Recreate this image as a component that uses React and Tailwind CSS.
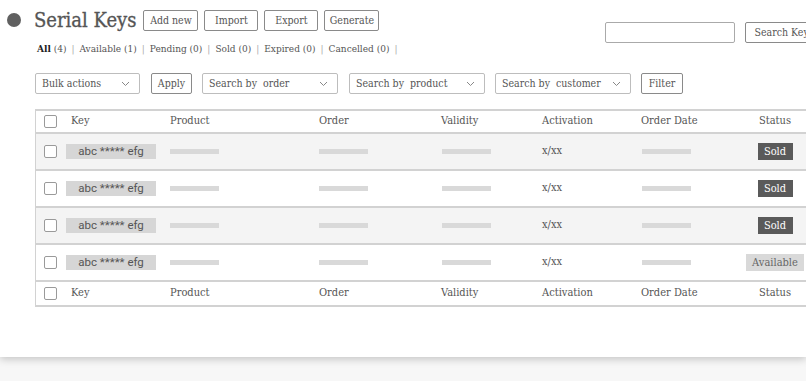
import React from 'react';

const slab = "font-['DejaVu_Serif_Condensed','DejaVu_Serif',serif]";

const rows = [
    { status: 'Sold', shaded: true },
    { status: 'Sold', shaded: false },
    { status: 'Sold', shaded: true },
    { status: 'Available', shaded: false },
];

const cols = 'grid grid-cols-[30px_104px_149px_122px_101px_99px_100px_80px] items-center';

const Checkbox = () => (
    <div className="ml-[8px] w-[13px] h-[13px] border border-[#9a9a9a] rounded-[2px] bg-white" />
);

const Bar = () => <div className="w-[49px] h-[5px] bg-[#d9d9d9]" />;

const Chevron = () => (
    <svg width="9" height="6" viewBox="0 0 9 6" className="text-[#888]">
        <path d="M1 1l3.5 3.5L8 1" fill="none" stroke="currentColor" strokeWidth="1" />
    </svg>
);

const Btn = ({ children, className = '' }) => (
    <button className={`h-[21px] border border-[#8a8a8a] rounded-[2px] bg-white text-[10.5px] text-[#555] leading-none whitespace-nowrap ${className}`}>
        {children}
    </button>
);

const Select = ({ label, width }) => (
    <div className={`${width} h-[21px] flex items-center justify-between pl-[6px] pr-[9px] border border-[#bdbdbd] rounded-[2px] text-[10.5px] text-[#555]`}>
        <span className="whitespace-pre">{label}</span>
        <Chevron />
    </div>
);

const HeaderRow = ({ bottom }) => (
    <div className={`${cols} h-[23px] text-[11px] text-[#555] ${bottom ? '' : 'border-b-2 border-[#d2d2d2]'}`}>
        <Checkbox />
        <span className="pl-[5px]">Key</span>
        <span>Product</span>
        <span>Order</span>
        <span>Validity</span>
        <span>Activation</span>
        <span>Order Date</span>
        <span className="w-[68px] text-center">Status</span>
    </div>
);

const App = () => {
    const links = [
        ['All', '4'],
        ['Available', '1'],
        ['Pending', '0'],
        ['Sold', '0'],
        ['Expired', '0'],
        ['Cancelled', '0'],
    ];

    return (
        <div className={`w-[806px] h-[381px] overflow-hidden bg-[#f7f7f7] ${slab}`}>
            <div className="h-[357px] bg-white shadow-[0_2px_8px_rgba(0,0,0,0.22)] overflow-hidden">
                <div className="w-[860px]">
                    {/* title bar */}
                    <div className="flex items-start h-[43px] pl-[7px] pt-[10px]">
                        <div className="mt-[3px] w-[14px] h-[14px] rounded-full bg-[#606060]" />
                        <h1 className="ml-[13px] text-[20px] leading-[21px] text-[#555] [-webkit-text-stroke:0.3px_#555]">Serial Keys</h1>
                        <div className="ml-[7px] flex gap-[6px]">
                            <Btn className="w-[55px]">Add new</Btn>
                            <Btn className="w-[54px]">Import</Btn>
                            <Btn className="w-[54px]">Export</Btn>
                            <Btn className="w-[55px]">Generate</Btn>
                        </div>
                        <div className="ml-[226px] mt-[12px] w-[130px] h-[21px] border border-[#aaa] rounded-[2px]" />
                        <Btn className="ml-[10px] mt-[12px] w-[80px] text-left pl-[8px]">Search Key</Btn>
                    </div>

                    {/* status links */}
                    <div className="h-[12px] leading-[12px] pl-[37px] flex items-center text-[10px] text-[#555]">
                        {links.map(([name, n], i) => (
                            <React.Fragment key={name}>
                                <span>
                                    <span className={i === 0 ? 'font-bold text-[#222]' : ''}>{name}</span> ({n})
                                </span>
                                <span className="mx-[5px] text-[#aaa]">|</span>
                            </React.Fragment>
                        ))}
                    </div>

                    {/* filters */}
                    <div className="mt-[18px] pl-[35px] flex items-center">
                        <Select label="Bulk actions" width="w-[105px]" />
                        <Btn className="ml-[11px] w-[41px]">Apply</Btn>
                        <Select label="Search by  order" width="ml-[10px] w-[136px]" />
                        <Select label="Search by  product" width="ml-[11px] w-[136px]" />
                        <Select label="Search by  customer" width="ml-[10px] w-[136px]" />
                        <Btn className="ml-[10px] w-[42px]">Filter</Btn>
                    </div>

                    {/* table */}
                    <div className="mt-[15px] ml-[35px] border-t-2 border-l border-b-2 border-[#d2d2d2]">
                        <HeaderRow />
                        {rows.map((r, i) => (
                            <div
                                key={i}
                                className={`${cols} h-[37px] border-b-2 border-[#d2d2d2] text-[11px] text-[#555] ${r.shaded ? 'bg-[#f4f4f4]' : 'bg-white'}`}
                            >
                                <Checkbox />
                                <div className="w-[90px] h-[15px] bg-[#d6d6d6] flex items-center justify-center font-['Roboto',sans-serif] text-[11.5px] text-[#555]">
                                    abc ***** efg
                                </div>
                                <Bar />
                                <Bar />
                                <div className="pl-[1px]"><Bar /></div>
                                <span>x/xx</span>
                                <div className="pl-[1px]"><Bar /></div>
                                <div className="w-[68px] flex justify-center">
                                    {r.status === 'Sold' ? (
                                        <span className="w-[35px] text-center h-[17px] leading-[17px] bg-[#5a5a5a] text-white text-[11px]">Sold</span>
                                    ) : (
                                        <span className="w-[58px] text-center h-[17px] leading-[17px] bg-[#d9d9d9] text-[#666] text-[11px]">Available</span>
                                    )}
                                </div>
                            </div>
                        ))}
                        <HeaderRow bottom />
                    </div>
                </div>
            </div>
        </div>
    );
};

export default App;
